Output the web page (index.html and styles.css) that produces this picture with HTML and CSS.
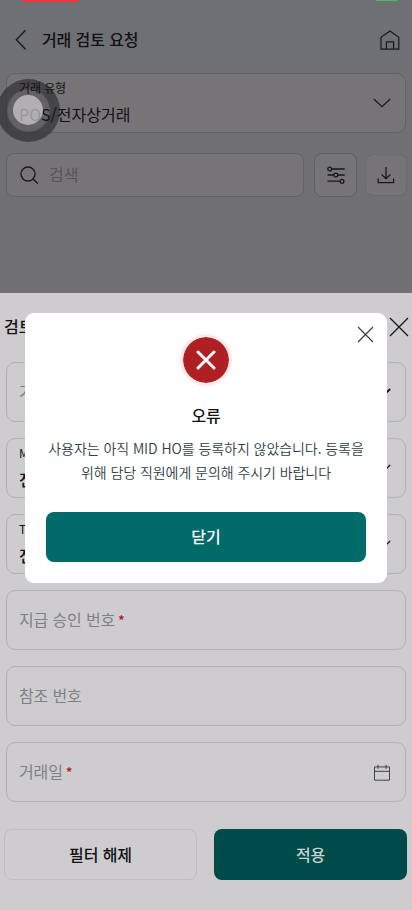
FILE: index.html
```html
<!DOCTYPE html>
<html lang="ko">
<head>
<meta charset="utf-8">
<meta name="viewport" content="width=device-width, initial-scale=1">
<title>거래 검토 요청</title>
<link rel="stylesheet" href="styles.css">
</head>
<body>
<div class="screen">
  <div class="status"><span class="rec"></span><span class="battery"></span></div>
  <header class="header">
    <svg class="back" width="12" height="22" viewBox="0 0 12 22"><path d="M10.5 1.3 1.3 10.8l9.2 9.5"/></svg>
    <h1>거래 검토 요청</h1>
    <svg class="home" width="20" height="20" viewBox="0 0 20 20"><path d="M1 19.1V7.2L10 1.1l8.8 6.1v11.9zM6.4 19V11.9h7.2V19"/></svg>
  </header>
  <main class="page">
    <div class="select">
      <div><small>거래 유형</small><p>POS/전자상거래</p></div>
      <svg width="18" height="10" viewBox="0 0 18 10"><path d="M.8 1 9 8.7 17.2 1"/></svg>
    </div>
    <div class="tools">
      <div class="search">
        <svg width="19" height="19" viewBox="0 0 19 19"><circle cx="8" cy="8" r="7"/><path d="m13 13 4.8 4.5"/></svg>
        <span>검색</span>
      </div>
      <div class="tool">
        <svg width="18" height="18" viewBox="0 0 18 18"><path d="M4.2 3h13.5M.5 9h6.2M10.8 9h6.9M.5 15.2h12.3"/><circle cx="2.7" cy="3" r="1.9"/><circle cx="8.8" cy="9" r="1.9"/><circle cx="15" cy="15.2" r="1.9"/></svg>
      </div>
      <div class="tool light">
        <svg width="18" height="18" viewBox="0 0 18 18"><path d="M9 1v11.5M4.6 8.5 9 12.7l4.4-4.2M1.2 12.6v4.1h15.4v-4.1"/></svg>
      </div>
    </div>
  </main>
  <section class="sheet">
    <div class="sheet-head">
      <h2>검토 요청</h2>
      <svg width="20" height="20" viewBox="0 0 20 20"><path d="m1 1 18 18M19 1 1 19"/></svg>
    </div>
    <div class="fields">
      <div class="field"><span class="hint">기간</span><svg class="chev bold" width="18" height="10" viewBox="0 0 18 10"><path d="M.8 1 9 8.7 17.2 1"/></svg></div>
      <div class="field"><div><small>MID</small><p>전체</p></div><svg class="chev" width="18" height="10" viewBox="0 0 18 10"><path d="M.8 1 9 8.7 17.2 1"/></svg></div>
      <div class="field"><div><small>TID</small><p>전체</p></div><svg class="chev" width="18" height="10" viewBox="0 0 18 10"><path d="M.8 1 9 8.7 17.2 1"/></svg></div>
      <div class="field"><span class="hint">지급 승인 번호<b>*</b></span></div>
      <div class="field"><span class="hint">참조 번호</span></div>
      <div class="field"><span class="hint">거래일<b>*</b></span><svg class="cal" width="18" height="18" viewBox="0 0 18 18"><path d="M1.5 2.9h15v13.3h-15zM1.5 7.3h15M5 .8v4M13 .8v4"/></svg></div>
    </div>
    <div class="actions"><button class="clear">필터 해제</button><button class="apply">적용</button></div>
  </section>
  <div class="touch"><i></i></div>
  <div class="touch-dot"></div>
  <div class="modal" role="dialog">
    <svg class="close" width="17" height="17" viewBox="0 0 17 17"><path d="m1 1 15 15M16 1 1 16"/></svg>
    <div class="error"><svg width="20" height="20" viewBox="0 0 20 20"><path d="m2 2 16 16M18 2 2 18"/></svg></div>
    <h3>오류</h3>
    <p>사용자는 아직 MID HO를 등록하지 않았습니다. 등록을<br>위해 담당 직원에게 문의해 주시기 바랍니다</p>
    <button>닫기</button>
  </div>
</div>
</body>
</html>
```

FILE: styles.css
```css
* { box-sizing: border-box; margin: 0; padding: 0; }
body { font-family: "Noto Sans CJK KR", sans-serif; font-size: 16px; color: #101214; }
svg { display: block; flex: none; fill: none; stroke: #15191c; stroke-width: 1.3; }
button { font: inherit; border: 0; padding-bottom: 2px; }
.screen { position: relative; width: 412px; height: 910px; overflow: hidden; background: #707072; display: flex; flex-direction: column; }

.status { height: 3px; flex: none; display: flex; justify-content: space-between; align-items: flex-start; padding: 0 14px 0 22px; background: #6f7073; }
.rec { width: 57px; height: 2px; background: #f0353c; border-radius: 0 0 4px 4px; }
.battery { width: 22px; height: 1px; background: #45bd61; }

.header { height: 60px; flex: none; display: flex; align-items: center; padding: 0 12px 0 15px; background: #6f7073; }
.header h1 { font-size: 16px; line-height: 24px; font-weight: 500; margin: 0 auto 0 15px; padding-top: 12px; letter-spacing: -.1px; }
.header .back { margin-top: 14px; }
.header .home { margin-top: 13px; stroke-width: 1.2; }

.page { height: 230px; flex: none; padding: 10px 5px 0 6px; }
.select { width: 400px; height: 60px; border: 1px solid #606366; border-radius: 9px; background: #777477; padding: 0 14px 0 12px; display: flex; justify-content: space-between; align-items: center; }
small { display: block; font-size: 12px; line-height: 16px; font-weight: 400; letter-spacing: -.1px; }
.select p { font-size: 16px; line-height: 24px; margin-top: 6px; }
.select > div { position: relative; z-index: 2; padding-bottom: 1px; }
.tools { display: flex; align-items: center; margin-top: 20px; }
.search { width: 298px; height: 44px; border: 1px solid #606366; border-radius: 8px; background: #777477; display: flex; align-items: center; gap: 10px; padding: 0 13px; color: #505658; }
.search span { line-height: 24px; padding-bottom: 2px; }
.tool { width: 43px; height: 44px; margin-left: 10px; border: 1px solid #5d6164; border-radius: 8px; background: #777477; display: flex; align-items: center; justify-content: center; }
.tool.light { width: 42px; height: 42px; margin-left: 8px; border-color: #696a6d; }

.sheet { height: 617px; flex: none; background: #cfccd0; padding: 24px 5px 0 4px; }
.sheet-head { height: 20px; display: flex; justify-content: space-between; align-items: center; }
.sheet-head h2 { font-size: 16px; font-weight: 500; line-height: 24px; padding-bottom: 2px; }
.sheet-head svg { margin-right: -2px; }
.fields { display: grid; gap: 16px; margin: 25px 0 0 2px; width: 400px; }
.field { height: 60px; border: 1px solid #adb2b5; border-radius: 9px; padding: 0 14px 0 12px; display: flex; align-items: center; justify-content: space-between; }
.field p { font-weight: 500; line-height: 24px; margin-top: 6px; }
.hint { color: #7a8284; line-height: 24px; letter-spacing: -.15px; padding-bottom: 2px; }
.hint b { color: #a51b20; font-weight: 500; font-size: 14px; margin-left: 3px; }
.chev { margin-top: 2px; }
.chev.bold { stroke-width: 1.8; }
.cal { stroke: #3c4246; stroke-width: 1; margin-top: 1px; }
.actions { display: flex; gap: 17px; margin-top: 27px; width: 403px; }
.actions button { width: 193px; height: 51px; border-radius: 8px; font-weight: 500; line-height: 24px; letter-spacing: -.1px; }
.clear { background: transparent; border: 1px solid #bbbec1; color: #101214; }
.apply { background: #004b49; color: #c9d2d4; }

.touch { position: absolute; z-index: 1; left: -3px; top: 79px; width: 63px; height: 63px; border-radius: 50%; background: rgba(50, 50, 53, .72); padding: 10px; }
.touch i { display: block; height: 100%; border-radius: 50%; background: rgba(116, 115, 119, .65); border: 1px solid rgba(90, 90, 93, .7); }
.touch-dot { position: absolute; z-index: 3; left: 13px; top: 95px; width: 30px; height: 30px; border-radius: 50%; background: rgba(214, 212, 216, .68); }

.modal { position: absolute; z-index: 4; left: 25px; top: 313px; width: 362px; height: 270px; border-radius: 9px; background: #fff; padding: 21px 21px 0; display: flex; flex-direction: column; align-items: center; }
.close { position: absolute; right: 13px; top: 13px; stroke: #2d3a40; stroke-width: 1.1; }
.error { width: 52px; height: 52px; flex: none; border: 3px solid #fde9e9; border-radius: 50%; background: #ae2024; background-clip: padding-box; display: flex; align-items: center; justify-content: center; }
.error svg { stroke: #fff; stroke-width: 3; stroke-linecap: round; }
.modal h3 { font-size: 16px; line-height: 24px; font-weight: 500; margin-top: 17px; letter-spacing: -.2px; }
.modal p { font-size: 14px; line-height: 24px; font-weight: 350; color: #2f4147; text-align: center; white-space: nowrap; margin-top: 9px; letter-spacing: -.06px; }
.modal button { width: 320px; height: 50px; flex: none; margin-top: 28px; border-radius: 8px; background: #006b68; color: #fff; font-weight: 500; line-height: 24px; }
```
